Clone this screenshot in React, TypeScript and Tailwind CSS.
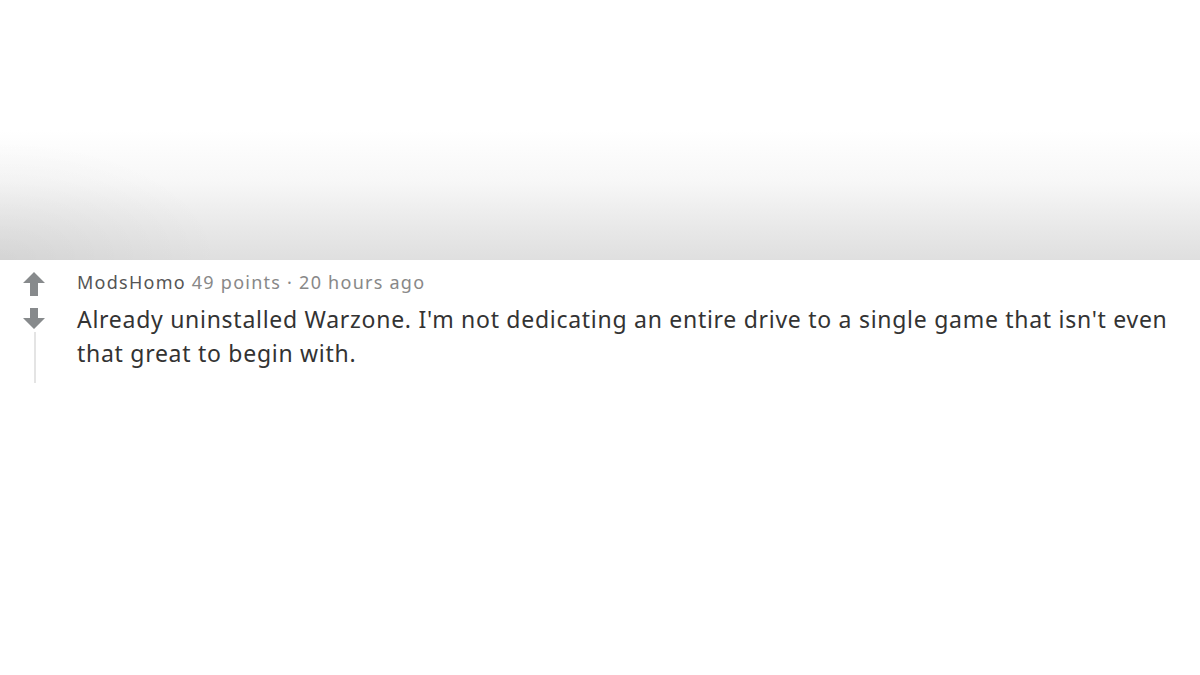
import React from 'react';

const ArrowUp: React.FC = () => (
  <svg viewBox="0 0 22 24" className="w-[22px] h-[24px]" fill="#878a8c">
    <path d="M11 0 L22 11 L15 11 L15 24 L7 24 L7 11 L0 11 Z" />
  </svg>
);

const ArrowDown: React.FC = () => (
  <svg viewBox="0 0 22 21" className="w-[22px] h-[21px]" fill="#878a8c">
    <path d="M7 0 L15 0 L15 10 L22 10 L11 21 L0 10 L7 10 Z" />
  </svg>
);

const App: React.FC = () => {
  return (
    <div className="w-[1200px] h-[675px] bg-white overflow-hidden font-['Noto_Sans','Open_Sans',sans-serif]">
      {/* faded header from the screenshot above */}
      <div className="h-[260px] bg-[radial-gradient(ellipse_220px_120px_at_0%_100%,rgba(0,0,0,0.05),rgba(0,0,0,0)),linear-gradient(to_bottom,#ffffff_0%,#ffffff_50%,#f7f7f7_70%,#e8e8e8_88%,#dfdfdf_100%)]" />

      <div className="flex pt-[10px]">
        <div className="w-[77px] pl-[23px] shrink-0 flex flex-col">
          <div className="w-[22px] flex flex-col items-center pt-[2px]">
            <ArrowUp />
            <div className="mt-[12px] h-[21px]">
              <ArrowDown />
            </div>
            <div className="mt-[3px] ml-[2px] w-[2px] h-[51px] bg-[#e4e4e4]" />
          </div>
        </div>

        <div className="flex-1 pr-[26px]">
          <div className="text-[18px] leading-[24px] tracking-[1.25px] text-[#888888]">
            <span className="text-[#555555]">ModsHomo</span> 49 points · 20 hours ago
          </div>
          <p className="mt-[8px] text-[23px] leading-[34px] tracking-[0.72px] text-[#333333]">
            Already uninstalled Warzone. I'm not dedicating an entire drive to a single game that isn't even that great to begin with.
          </p>
        </div>
      </div>
    </div>
  );
};

export default App;
